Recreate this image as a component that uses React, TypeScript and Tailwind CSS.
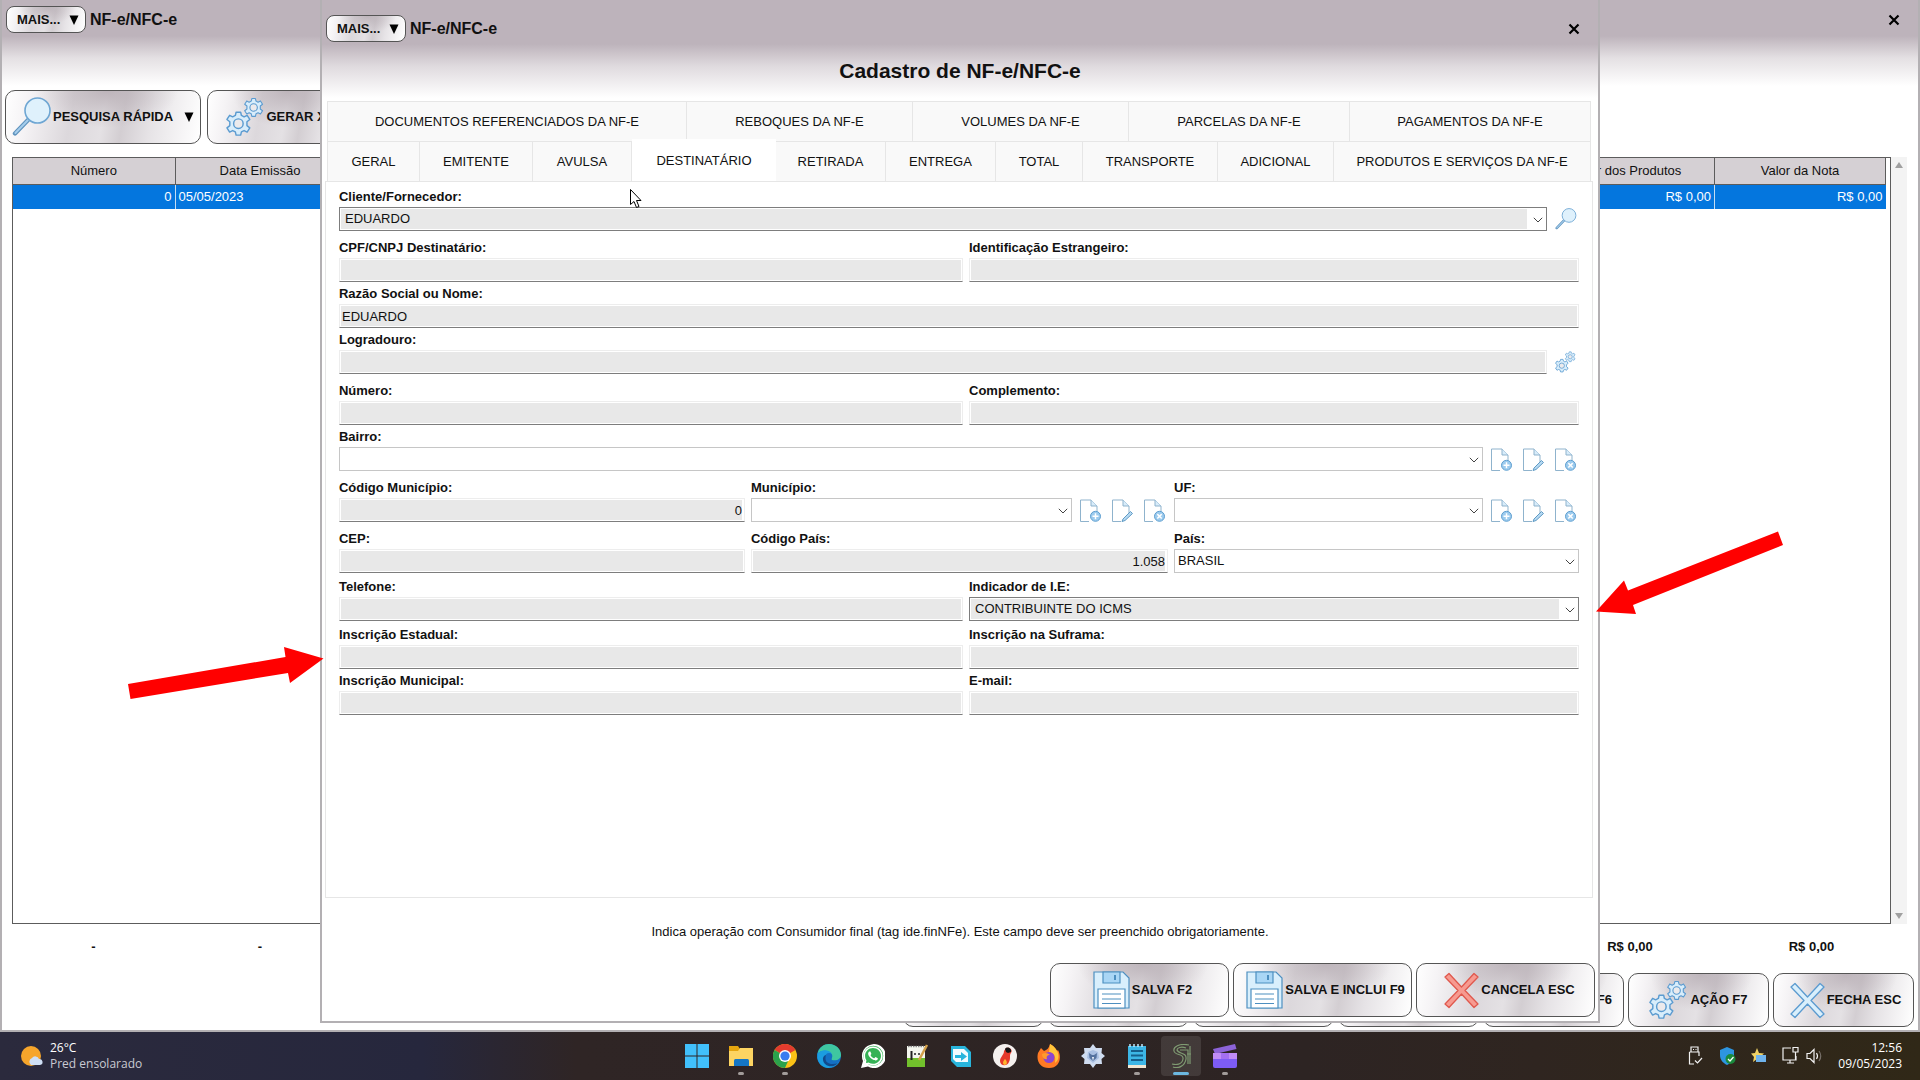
import React from 'react';
import { FaWhatsapp } from 'react-icons/fa';

const metal =
  'bg-[radial-gradient(ellipse_at_52%_0%,rgba(180,170,177,0.8)_0%,rgba(195,187,192,0)_50%),linear-gradient(100deg,#ffffff_0%,#f5f3f5_12%,#dcd8dc_34%,#e4e1e4_50%,#d3ced2_60%,#e6e3e6_74%,#ffffff_100%)]';

const inputClass =
  'h-6 w-full min-w-0 rounded-none border border-[#ededed] border-b-[#7d7d7d] bg-[#e8e8e8] bg-clip-content p-px indent-px text-[13px] leading-5 text-[#111] outline-none';

type TabItem = { label: string; active?: boolean };

const upperTabs: TabItem[] = [
  { label: 'DOCUMENTOS REFERENCIADOS DA NF-E' },
  { label: 'REBOQUES DA NF-E' },
  { label: 'VOLUMES DA NF-E' },
  { label: 'PARCELAS DA NF-E' },
  { label: 'PAGAMENTOS DA NF-E' }
];

const lowerTabs: TabItem[] = [
  { label: 'GERAL' },
  { label: 'EMITENTE' },
  { label: 'AVULSA' },
  { label: 'DESTINATÁRIO', active: true },
  { label: 'RETIRADA' },
  { label: 'ENTREGA' },
  { label: 'TOTAL' },
  { label: 'TRANSPORTE' },
  { label: 'ADICIONAL' },
  { label: 'PRODUTOS E SERVIÇOS DA NF-E' }
];

/* Icons */

function SearchIcon({ className }: { className: string }) {
  return (
    <svg viewBox="0 0 40 40" className={className} fill="none">
      <path d="M16 23 L3 36.5" stroke="#5f93bd" strokeWidth="4.4" strokeLinecap="round" />
      <path d="M16 23 L3.4 36" stroke="#a5cdec" strokeWidth="2" strokeLinecap="round" />
      <circle cx="25.5" cy="13.5" r="12.5" fill="#dff1fc" stroke="#6ea6d3" strokeWidth="1.6" />
    </svg>
  );
}

function Gear({ x, y, scale, rotate }: { x: number; y: number; scale: number; rotate: number }) {
  return (
    <g transform={`translate(${x} ${y}) rotate(${rotate}) scale(${scale})`}>
      <path
        d="M-2.4 -12 H2.4 L3.2 -8.6 L6 -7.2 L9.2 -8.8 L12 -4.4 L9 -2 V2 L12 4.4 L9.2 8.8 L6 7.2 L3.2 8.6 L2.4 12 H-2.4 L-3.2 8.6 L-6 7.2 L-9.2 8.8 L-12 4.4 L-9 2 V-2 L-12 -4.4 L-9.2 -8.8 L-6 -7.2 L-3.2 -8.6 Z"
        fill="#d8edfb"
        stroke="#5b9bd0"
        strokeWidth="1.5"
        strokeLinejoin="round"
      />
      <circle r="5" fill="#eceaec" stroke="#5b9bd0" strokeWidth="1.5" />
    </g>
  );
}

function GearsIcon({ className }: { className: string }) {
  return (
    <svg viewBox="1 -1 42 42" className={className} fill="none">
      <Gear x={14} y={27} scale={1} rotate={0} />
      <Gear x={30} y={10} scale={0.78} rotate={0} />
    </svg>
  );
}

function FloppyIcon() {
  return (
    <svg viewBox="0 0 40 40" className="size-10 shrink-0" fill="none" stroke="#4d8fc0" strokeWidth="1.2">
      <path d="M3 2 H32 L38 8 V38 H3 Z" fill="#d9effc" />
      <path d="M12 2 H29 V13 H12 Z" fill="#a9d6f5" />
      <path d="M24 5 V10" strokeWidth="2" />
      <path d="M7 19 H34 V38 H7 Z" fill="#fff" />
      <path d="M11 24 H30 M11 29 H30 M11 33.500 H30" />
    </svg>
  );
}

function CrossIcon({ fill, stroke }: { fill: string; stroke: string }) {
  return (
    <svg viewBox="0 0 40 40" className="size-10 shrink-0">
      <path
        d="M5 7 L9 3.500 L21.500 17 L34 3.500 L38 7 L25 20.500 L38 34 L34 37.500 L21.500 24 L9 37.500 L5 34 L18 20.500 Z"
        fill={fill}
        stroke={stroke}
        strokeWidth="1.3"
        strokeLinejoin="round"
      />
    </svg>
  );
}

function PageIcon({ kind }: { kind: 'add' | 'edit' | 'remove' }) {
  return (
    <svg viewBox="0 -1 24 24" className="size-6" fill="none">
      <path d="M9 22.500 H0.500 V1 H11 L17 7 V14" stroke="#8fb3cd" />
      <path d="M11 1 V7 H17" fill="#d8ecfa" stroke="#8fb3cd" />
      {kind === 'edit' ? (
        <path d="M11 20 L18.500 12.500 L20.500 14.500 L13 21.500 L10 22.500 Z" fill="#b6d9f2" stroke="#5f9ac4" />
      ) : (
        <>
          <circle cx="15.500" cy="17.300" r="5" fill="#9ccbee" stroke="#5f9fd0" />
          <path
            d={kind === 'add' ? 'M15.500 14.300 V20.300 M12.500 17.300 H18.500' : 'M13.300 15.100 L17.700 19.500 M17.700 15.100 L13.300 19.500'}
            stroke="#fff"
            strokeWidth="1.5"
          />
        </>
      )}
    </svg>
  );
}

function CloseButton({ label }: { label: string }) {
  return (
    <button type="button" aria-label={label} className="flex size-6 items-center justify-center">
      <svg viewBox="0 0 12 12" className="size-3" stroke="#000" strokeWidth="2.2">
        <path d="M1.500 1.500 L10.500 10.500 M10.500 1.500 L1.500 10.500" />
      </svg>
    </button>
  );
}

function Triangle() {
  return (
    <svg viewBox="0 0 10 10" className="h-[10px] w-[10px] shrink-0">
      <path d="M0.500 0.500 H9.500 L5 10 Z" fill="#000" />
    </svg>
  );
}

/* Building blocks */

function TitleBar({ close }: { close: string }) {
  return (
    <div className="flex items-center">
      <button
        type="button"
        className={`flex h-[27px] w-20 items-center justify-between rounded-lg border border-[#555] pr-[6px] pl-[10px] text-[13px] font-bold ${metal}`}
      >
        MAIS... <Triangle />
      </button>
      <span className="ml-1 flex-1 text-base leading-6 font-bold">NF-e/NFC-e</span>
      <CloseButton label={close} />
    </div>
  );
}

function MetalButton({ children, className, label }: { children?: React.ReactNode; className: string; label?: string }) {
  return (
    <button
      type="button"
      aria-label={label}
      className={`flex h-[54px] shrink-0 items-center justify-center gap-px rounded-[10px] border border-[#555] text-[13px] font-bold whitespace-nowrap ${metal} ${className}`}
    >
      {children}
    </button>
  );
}

function Field({ id, label, children }: { id: string; label: string; children: React.ReactNode }) {
  return (
    <div className="min-w-0">
      <label htmlFor={id} className="block h-[22px] text-[13px] leading-6 font-bold">
        {label}
      </label>
      <div className="flex items-center gap-2">{children}</div>
    </div>
  );
}

function TextField({ id, label, value = '', right }: { id: string; label: string; value?: string; right?: boolean }) {
  return (
    <Field id={id} label={label}>
      <input id={id} type="text" defaultValue={value} className={`${inputClass} ${right ? 'pr-[2px] text-right' : ''}`} />
    </Field>
  );
}

function Combo({ id, value = '', filled }: { id: string; value?: string; filled?: boolean }) {
  return (
    <div className={`relative h-6 min-w-0 flex-1 border p-px ${filled ? 'border-[#7d7d7d]' : 'border-[#c6c6c6]'}`}>
      <select
        id={id}
        defaultValue={value}
        className={`block h-5 w-full appearance-none bg-clip-content pr-[18px] text-[13px] text-[#111] outline-none ${
          filled ? 'bg-[#e8e8e8] indent-1' : 'bg-white indent-[2px]'
        }`}
      >
        <option>{value}</option>
      </select>
      <svg viewBox="0 0 10 6" className="pointer-events-none absolute top-[9px] right-[3px] h-[6px] w-[10px]" fill="none" stroke="#444">
        <path d="M0.800 0.800 L5 5 L9.200 0.800" />
      </svg>
    </div>
  );
}

function RecordButtons({ name }: { name: string }) {
  return (
    <>
      <button type="button" aria-label={`Incluir ${name}`}><PageIcon kind="add" /></button>
      <button type="button" aria-label={`Editar ${name}`}><PageIcon kind="edit" /></button>
      <button type="button" aria-label={`Excluir ${name}`}><PageIcon kind="remove" /></button>
    </>
  );
}

function TabRow({ tabs, className }: { tabs: TabItem[]; className: string }) {
  return (
    <div role="tablist" className={`mx-[2px] grid h-10 border-l border-[#e6e6e6] ${className}`}>
      {tabs.map((tab) => (
        <button
          key={tab.label}
          type="button"
          role="tab"
          aria-selected={!!tab.active}
          className={`min-w-0 border-[#e6e6e6] text-[13px] whitespace-nowrap ${
            tab.active ? '-mt-[2px] -mb-px bg-white' : 'border-t border-r bg-[#f9f9f9] pt-px'
          }`}
        >
          {tab.label}
        </button>
      ))}
    </div>
  );
}

/* Window with the list of invoices */

function InvoiceList() {
  return (
    <section className="flex flex-1 flex-col border-x-2 border-b-2 border-[#b3b0b3] bg-[linear-gradient(#bdb3bb_0px,#bdb3bb_36px,#e4e0e3_58px,#ffffff_86px)]">
      <header className="pt-[6px] pr-3 pl-1">
        <TitleBar close="Fechar lista" />
      </header>
      <div className="mt-[57px] flex gap-[6px] pl-[3px]">
        <MetalButton className="w-[196px] pr-[6px] pl-[6px]">
          <SearchIcon className="size-10 shrink-0" />
          <span className="flex-1 text-left">PESQUISA RÁPIDA</span>
          <Triangle />
        </MetalButton>
        <MetalButton className="w-[156px]">
          <GearsIcon className="size-10" />
          GERAR XML
        </MetalButton>
      </div>

      <div className="mt-[13px] mr-[11px] ml-[10px] flex flex-1">
        <div className="flex-1 border border-[#5c5c5c] pr-1">
          <table className="w-full table-fixed border-collapse text-[13px]">
            <colgroup>
              <col className="w-[162px]" />
              <col className="w-[170px]" />
              <col />
              <col className="w-[176px]" />
              <col className="w-[171px]" />
            </colgroup>
            <thead>
              <tr className="h-[26px] bg-[#d5d0d4]">
                <th className="border-r border-b border-[#5c5c5c] font-normal">Número</th>
                <th className="border-r border-b border-[#5c5c5c] font-normal">Data Emissão</th>
                <th className="border-r border-b border-[#5c5c5c]" />
                <th className="border-r border-b border-[#5c5c5c] font-normal">Valor dos Produtos</th>
                <th className="border-r border-b border-[#5c5c5c] font-normal">Valor da Nota</th>
              </tr>
            </thead>
            <tbody>
              <tr className="h-[25px] bg-[#0476de] text-white">
                <td className="border-r border-[#c5dcf2] pr-[3px] text-right">0</td>
                <td className="border-r border-[#c5dcf2] pl-[3px]">05/05/2023</td>
                <td className="border-r border-[#c5dcf2]" />
                <td className="border-r border-[#c5dcf2] pr-[3px] text-right">R$ 0,00</td>
                <td className="pr-[3px] text-right">R$ 0,00</td>
              </tr>
            </tbody>
          </table>
        </div>
        <div className="flex w-4 flex-col items-center justify-between bg-[#f3f3f3] py-[5px]">
          <svg viewBox="0 0 8 6" className="h-[6px] w-2"><path d="M4 0 L8 6 H0 Z" fill="#a0a0a0" /></svg>
          <svg viewBox="0 0 8 6" className="h-[6px] w-2"><path d="M4 6 L8 0 H0 Z" fill="#a0a0a0" /></svg>
        </div>
      </div>

      <div className="flex h-[49px] items-center pr-[16px] pb-1 pl-[10px] text-[13px] font-bold">
        <span className="w-[163px] text-center">-</span>
        <span className="w-[170px] text-center">-</span>
        <span className="flex-1" />
        <span className="w-[182px] text-center">R$ 0,00</span>
        <span className="w-[181px] text-center">R$ 0,00</span>
      </div>

      <div className="flex justify-end gap-1 pr-1 pb-[3px]">
        <MetalButton className="w-[141px]" label="Inclui" />
        <MetalButton className="w-[141px]" label="Altera" />
        <MetalButton className="w-[141px]" label="Exclui" />
        <MetalButton className="w-[141px]" label="Visualiza" />
        <MetalButton className="w-[141px] justify-end pr-[11px]" label="Imprime F6">F6</MetalButton>
        <MetalButton className="w-[141px]">
          <GearsIcon className="size-10 shrink-0" />
          AÇÃO F7
        </MetalButton>
        <MetalButton className="w-[141px]">
          <CrossIcon fill="#d9effc" stroke="#5b9bd0" />
          FECHA ESC
        </MetalButton>
      </div>
    </section>
  );
}

/* Registration window */

function InvoiceForm() {
  const halves = 'grid grid-cols-[624fr_610fr] gap-[6px]';
  const thirds = 'grid grid-cols-[406fr_417fr_405fr] gap-[6px]';

  return (
    <section className="absolute top-0 right-1/6 bottom-[9px] left-1/6 flex flex-col border-x-2 border-b-2 border-[#b3b0b3] bg-[linear-gradient(#bdb3bb_0px,#bdb3bb_44px,#dfdade_66px,#ffffff_98px)]">
      <header className="h-[101px] shrink-0 pt-[15px] pr-3 pl-1">
        <TitleBar close="Fechar cadastro" />
        <h1 className="mt-[14px] pl-2 text-center text-[21px] leading-[30px] font-bold">Cadastro de NF-e/NFC-e</h1>
      </header>

      <div className="mr-[5px] ml-[3px] flex flex-1 flex-col">
        <TabRow tabs={upperTabs} className="grid-cols-[359fr_226fr_216fr_221fr_241fr]" />
        <TabRow tabs={lowerTabs} className="grid-cols-[92fr_113fr_99fr_144fr_110fr_110fr_87fr_135fr_116fr_257fr]" />

        <form className="flex-1 border border-[#e6e6e6] px-[13px] pt-[3px]">
          <div className="pb-[5px]">
            <Field id="cliente" label="Cliente/Fornecedor:">
              <Combo id="cliente" value="EDUARDO" filled />
              <button type="button" aria-label="Pesquisar cliente" className="w-6 shrink-0">
                <SearchIcon className="size-[22px]" />
              </button>
            </Field>
          </div>
          <div className={halves}>
            <TextField id="cpf" label="CPF/CNPJ Destinatário:" />
            <TextField id="estrangeiro" label="Identificação Estrangeiro:" />
          </div>
          <TextField id="razao" label="Razão Social ou Nome:" value="EDUARDO" />
          <div className="pb-[5px]">
            <Field id="logradouro" label="Logradouro:">
              <input id="logradouro" type="text" className={inputClass} />
              <button type="button" aria-label="Buscar endereço" className="w-6 shrink-0">
                <GearsIcon className="size-[22px]" />
              </button>
            </Field>
          </div>
          <div className={halves}>
            <TextField id="numero" label="Número:" />
            <TextField id="complemento" label="Complemento:" />
          </div>
          <div className="pb-[5px]">
            <Field id="bairro" label="Bairro:">
              <Combo id="bairro" />
              <RecordButtons name="bairro" />
            </Field>
          </div>
          <div className={`${thirds} pb-[5px]`}>
            <TextField id="codmun" label="Código Município:" value="0" right />
            <Field id="municipio" label="Município:">
              <Combo id="municipio" />
              <RecordButtons name="município" />
            </Field>
            <Field id="uf" label="UF:">
              <Combo id="uf" />
              <RecordButtons name="UF" />
            </Field>
          </div>
          <div className={`${thirds} pb-[2px]`}>
            <TextField id="cep" label="CEP:" />
            <TextField id="codpais" label="Código País:" value="1.058" right />
            <Field id="pais" label="País:">
              <Combo id="pais" value="BRASIL" />
            </Field>
          </div>
          <div className={`${halves} pb-[2px]`}>
            <TextField id="telefone" label="Telefone:" />
            <Field id="indicador" label="Indicador de I.E:">
              <Combo id="indicador" value="CONTRIBUINTE DO ICMS" filled />
            </Field>
          </div>
          <div className={halves}>
            <TextField id="ie" label="Inscrição Estadual:" />
            <TextField id="suframa" label="Inscrição na Suframa:" />
          </div>
          <div className={halves}>
            <TextField id="im" label="Inscrição Municipal:" />
            <TextField id="email" label="E-mail:" />
          </div>
        </form>
      </div>

      <p className="mt-[22px] text-center text-[13px] leading-6">
        Indica operação com Consumidor final (tag ide.finNFe). Este campo deve ser preenchido obrigatoriamente.
      </p>
      <div className="mt-[19px] flex justify-end gap-1 pr-[3px] pb-1">
        <MetalButton className="w-[179px] pl-1"><FloppyIcon />SALVA F2</MetalButton>
        <MetalButton className="w-[179px] pl-1"><FloppyIcon />SALVA E INCLUI F9</MetalButton>
        <MetalButton className="w-[179px] pl-1"><CrossIcon fill="#f79a90" stroke="#e0584d" />CANCELA ESC</MetalButton>
      </div>

      {/* Red callouts on both sides of the form */}
      <svg viewBox="0 0 200 64" className="pointer-events-none absolute top-[640px] -left-[197px] h-16 w-[200px]">
        <path d="M3 44 L160.500 17 L159 7 L198.500 18.500 L165 43 L163 33 L5.500 59 Z" fill="#f00" />
      </svg>
      <svg viewBox="0 0 200 90" className="pointer-events-none absolute top-[530px] -right-[193px] h-[90px] w-[200px]">
        <path d="M5 81.500 L33 50.500 L37 60.500 L187 1.500 L192 15 L42 75 L45 84 Z" fill="#f00" />
      </svg>
      <svg viewBox="0 0 13 20" className="pointer-events-none absolute top-[189px] left-[308px] h-5 w-[13px]">
        <path d="M0.500 0.500 V15.500 L4 12.500 L6.500 18.500 L9 17.500 L6.500 11.500 H11 Z" fill="#fff" stroke="#000" />
      </svg>
    </section>
  );
}

/* Taskbar */

const apps: { name: string; open?: boolean; current?: boolean; art: React.ReactNode }[] = [
  {
    name: 'Iniciar',
    art: <path d="M0 0 H11.500 V11.500 H0 Z M12.500 0 H24 V11.500 H12.500 Z M0 12.500 H11.500 V24 H0 Z M12.500 12.500 H24 V24 H12.500 Z" fill="#41c0fb" />
  },
  {
    name: 'Explorador de Arquivos',
    open: true,
    art: (
      <>
        <path d="M0 2 H9 L11 5 H24 V22 H0 Z" fill="#e5a50f" />
        <path d="M0 7 H9 L11 4 H24 V22 H0 Z" fill="#fdd462" />
        <path d="M5 22 V16.500 Q5 15 6.500 15 H18.500 Q20 15 20 16.500 V22 Z" fill="#1576c4" />
      </>
    )
  },
  {
    name: 'Chrome',
    open: true,
    art: (
      <>
        <circle cx="12" cy="12" r="12" fill="#fbc116" />
        <path d="M12 12 L1.600 6 A12 12 0 0 1 22.400 6 Z" fill="#e33b2e" />
        <path d="M12 12 L1.600 6 A12 12 0 0 0 12 24 L16 15 Z" fill="#2ba24c" />
        <circle cx="12" cy="12" r="6" fill="#fff" />
        <circle cx="12" cy="12" r="4.600" fill="#3a7cf0" />
      </>
    )
  },
  {
    name: 'Edge',
    art: (
      <>
        <circle cx="12" cy="12" r="12" fill="#1470c4" />
        <path d="M0.500 10 C2 3 7 0 12 0 C19 0 24 5 24 11 C24 15 20 17 15 16 C14 15 16 13 15 10.500 C13 6 4 5 0.500 10 Z" fill="#3fc7a0" />
        <path d="M0.500 10 C4 5 12 5 15 10 C10 7 6 12 9 17 C12 22 18 21 22 18 C17 26 3 27 0.300 14 Z" fill="#1b9de0" />
        <path d="M9 11 C7 17 11 22 21 19 C15 26 5 21 6 14 C6.500 12 8 11 9 11 Z" fill="#114a8c" />
      </>
    )
  },
  {
    name: 'WhatsApp',
    art: (
      <>
        <path d="M0 24 L2 17 A12 12 0 1 1 7 22.500 Z" fill="#fff" />
        <circle cx="12.300" cy="11.800" r="10" fill="#35b255" />
        <FaWhatsapp x={1} y={1} size={22} color="#fff" />
      </>
    )
  },
  {
    name: 'Notepad++',
    art: (
      <>
        <path d="M2 2 H20 V23 H2 Z" fill="#f5f7ef" />
        <path d="M2 14 H20 V23 H2 Z" fill="#72c02c" />
        <path d="M3 2.500 H19" stroke="#8a8a8a" strokeWidth="1.500" strokeDasharray="1.500 1" />
        <path d="M6.500 7 V16" stroke="#222" strokeWidth="2" />
        <path d="M9 10 H11 M13 10 H15" stroke="#222" strokeWidth="1.600" />
        <path d="M22 1 L14 16" stroke="#d3a04a" strokeWidth="2.500" />
      </>
    )
  },
  {
    name: 'Transferência',
    art: (
      <>
        <path d="M2 2 H16 L22 8 V23 H8 L2 17 Z" fill="#29b5dc" />
        <path d="M4 5 H15 L19 9 V18 H7 L4 15 Z" fill="#f3fbfe" />
        <path d="M6 11 H12 V8 L18 12.500 L12 17 V14 H6 Z" fill="#29b5dc" />
      </>
    )
  },
  {
    name: 'Firebird',
    art: (
      <>
        <circle cx="12" cy="12" r="12" fill="#f4f0ee" />
        <path d="M13 4 C17 3 20 6 18 9 C16 11 18 14 16 18 C14 23 7 22 7 17 C7 13 11 11 11 7 Z" fill="#e5392b" />
        <path d="M12 5 C14 2 19 4 18 8 L15 9 L13 8 Z" fill="#161616" />
        <path d="M12 15 C15 18 14 21 11.500 21 C9 20 10 17 12 15 Z" fill="#ffb52e" />
      </>
    )
  },
  {
    name: 'Firefox',
    art: (
      <>
        <path d="M1 9 L4 4 L7 7 C10 6 12 4 13 0 C18 3 19 5 20 7 L21 6 C25 13 23 24 12 24 C3 24 -1 17 1 9 Z" fill="#ff7a24" />
        <path d="M13 0 C18 3 19 5 20 7 C23 12 21 17 18 19 C19 12 17 9 12 8 Z" fill="#ffc53a" />
        <circle cx="12" cy="13.500" r="5.500" fill="#8b46cf" />
        <path d="M5 10 C8 8 11 9 13 11 C10 11 9 13 10 15 C7 16 5 13 5 10 Z" fill="#ff9a2b" />
      </>
    )
  },
  {
    name: 'Utilitário',
    art: (
      <>
        <path d="M12 0 L15 4 L21 4 L20.500 9 L24 12 L20.500 15 L21 20 L15 20 L12 24 L9 20 L3 20 L3.500 15 L0 12 L3.500 9 L3 4 L9 4 Z" fill="#cfdcf0" />
        <path d="M7 8 L12 6 L17 8 L18 14 L12 19 L6 14 Z" fill="#a9bfe2" />
        <path d="M8 9 L11 11 H13 L16 9 L15.500 14 L12 17 L8.500 14 Z" fill="#55729f" />
        <path d="M11 13 H13 L12 17 Z" fill="#eef3fb" />
      </>
    )
  },
  {
    name: 'Bloco de Notas',
    open: true,
    art: (
      <>
        <path d="M3 2 H21 V24 H3 Z" fill="#3cb6e6" />
        <path d="M3 21 H21 V24 H3 Z" fill="#f0e6d2" />
        <path d="M5 0 V3 M9 0 V3 M13 0 V3 M17 0 V3" stroke="#bfe8fa" strokeWidth="1.500" />
        <path d="M6 7 H18 M6 11.500 H18 M6 16 H18" stroke="#155f8c" strokeWidth="2" />
      </>
    )
  },
  {
    name: 'Sistema',
    current: true,
    art: (
      <path
        d="M20 1 C10 -1 4 3 5 7 C6 12 15 9 14 15 C13 21 7 21 3 20 M17 4 C12 2 8 4 8 6 C9 10 18 8 17 15 C16 22 9 25 4 23 M21 2 V20 M18 10 H22 M11 6 H19 V20"
        fill="none"
        stroke="#7f9a72"
        strokeWidth="1.200"
      />
    )
  },
  {
    name: 'Clipchamp',
    open: true,
    art: (
      <>
        <path d="M0 5 L22 0 L23.500 5 L2 10 Z" fill="#8c63d8" />
        <path d="M0 9 H24 V22 Q24 24 22 24 H2 Q0 24 0 22 Z" fill="#7d5cf5" />
        <path d="M0 9 H24 V15 H0 Z" fill="#c08cf7" />
        <path d="M8 9 H16 V15 H8 Z" fill="#a46ff0" />
      </>
    )
  }
];

function Taskbar() {
  return (
    <footer className="grid h-12 grid-cols-[1fr_auto_1fr] items-center bg-[linear-gradient(90deg,#2b2a3d_0%,#26273d_22%,#2f2525_30%,#2d2423_68%,#2f2520_80%,#302817_100%)] font-['Open_Sans','Noto_Sans',sans-serif] text-xs leading-4 text-white">
      <div className="flex items-center gap-[7px] pl-[21px]">
        <svg viewBox="0 0 22 22" className="size-[22px]">
          <circle cx="10" cy="11" r="10" fill="#f6a52b" />
          <path d="M10 20 A4 4 0 0 1 11 13 A4 4 0 0 1 18 14 A3 3 0 0 1 19 20 Z" fill="#cfdff5" />
        </svg>
        <div>
          <p>26°C</p>
          <p className="text-[#c9c9d2]">Pred ensolarado</p>
        </div>
      </div>

      <nav className="flex gap-1 pl-[2px]">
        {apps.map((app) => (
          <button
            key={app.name}
            type="button"
            aria-label={app.name}
            className={`flex size-10 flex-col items-center rounded pt-2 ${app.current ? 'bg-white/10' : ''}`}
          >
            <svg viewBox="0 0 24 24" className="size-6 shrink-0">{app.art}</svg>
            {app.open && <span className="mt-1 h-[3px] w-[6px] rounded-full bg-[#a29c9a]" />}
            {app.current && <span className="mt-1 h-[3px] w-4 rounded-full bg-[#6cb8e0]" />}
          </button>
        ))}
      </nav>

      <div className="flex items-center justify-end pr-[18px]">
        <svg viewBox="0 0 136 20" className="mr-[14px] h-5 w-[136px]" fill="none" stroke="#f2f2f2" strokeWidth="1.200">
          <path d="M3 6 V1 H10 V6 M1.500 6 H11 V10 M6 18 H1.500 V6 M5 3.500 H6 M7.500 3.500 H8.500 M7 14.500 L9.500 17 L14 12" />
          <path d="M39 1 L46 4 V9 C46 14 43 17 39 19 C35 17 32 14 32 9 V4 Z" fill="#2d95e0" stroke="none" />
          <circle cx="42.500" cy="13" r="5" fill="#1a8a3c" stroke="none" />
          <path d="M40 13 L42 15 L45.500 11" stroke="#fff" />
          <path d="M69 2 L71 7 L76 7.500 L72 11 L73 16 L69 13 L65 16 L66 11 L63 7.500 L67 7 Z" fill="#f0d264" stroke="none" />
          <path d="M68 9 H78 V16 H68 Z" fill="#6fb3ec" stroke="none" />
          <path d="M103 2 H95 V14 H108 V10 M99 17 H106 M102 14 V17 M105 1.500 H110 V6 H105 Z M107.500 6 V14" />
          <path d="M119 7.500 H122 L126 3.500 V16.500 L122 12.500 H119 Z M128.500 7 Q130.500 10 128.500 13" />
          <path d="M131 5 Q134.500 10 131 15" stroke="#77706a" />
        </svg>
        <div className="text-right">
          <p>12:56</p>
          <p>09/05/2023</p>
        </div>
      </div>
    </footer>
  );
}

export default function App() {
  return (
    <div className="flex min-h-screen flex-col bg-white font-['Liberation_Sans',Arial,sans-serif] text-[#111]">
      <main className="relative flex flex-1 flex-col overflow-hidden">
        <InvoiceList />
        <InvoiceForm />
      </main>
      <Taskbar />
    </div>
  );
}
